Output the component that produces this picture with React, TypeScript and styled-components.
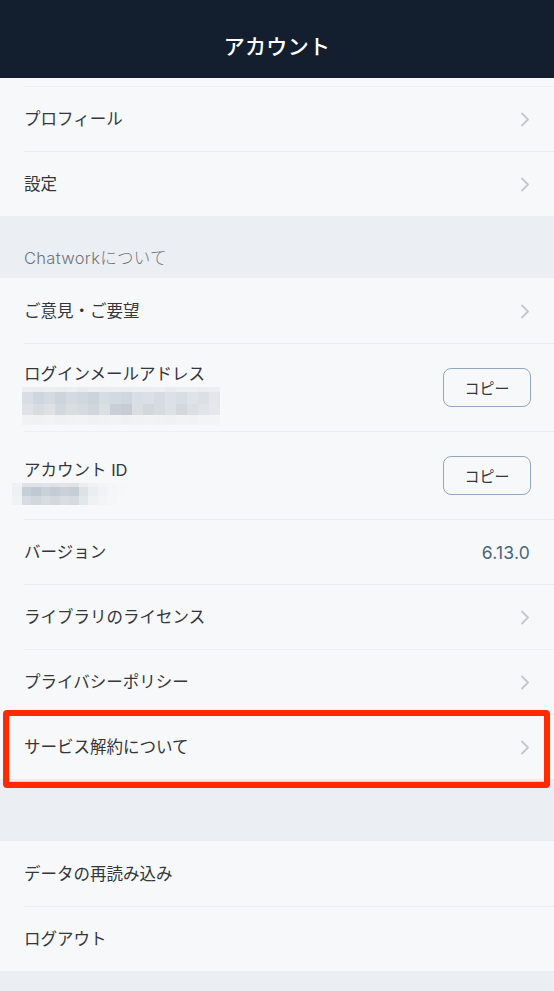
import styled, { createGlobalStyle } from 'styled-components'

const GlobalStyle = createGlobalStyle`
  html, body {
    margin: 0;
    padding: 0;
    background: #ebeef2;
  }
  body {
    font-family: "Inter", "Noto Sans CJK JP", sans-serif;
    -webkit-font-smoothing: antialiased;
  }
`

type RowItem = {
  label: string
  kind?: 'chevron' | 'copy' | 'value' | 'none'
  value?: string
  blur?: 'mail' | 'id'
  tall?: boolean
  highlight?: boolean
}

const groupOne: RowItem[] = [
  { label: 'プロフィール', kind: 'chevron' },
  { label: '設定', kind: 'chevron' },
]

const groupTwo: RowItem[] = [
  { label: 'ご意見・ご要望', kind: 'chevron' },
  { label: 'ログインメールアドレス', kind: 'copy', blur: 'mail', tall: true },
  { label: 'アカウント ID', kind: 'copy', blur: 'id', tall: true },
  { label: 'バージョン', kind: 'value', value: '6.13.0' },
  { label: 'ライブラリのライセンス', kind: 'chevron' },
  { label: 'プライバシーポリシー', kind: 'chevron' },
  { label: 'サービス解約について', kind: 'chevron', highlight: true },
]

const groupThree: RowItem[] = [
  { label: 'データの再読み込み', kind: 'none' },
  { label: 'ログアウト', kind: 'none' },
]

// mosaic colours for the hidden mail address / id
const mailCells = [
  ['#eceff2', '#e9ecf0', '#eceff2', '#eaedf0', '#eceff2', '#e8ebef', '#eceff2', '#eaedf1', '#eceff2', '#e9ecf0', '#eceff2', '#eaedf1', '#eceff2', '#e8ebef', '#eceff2', '#eceff2', '#eaedf0', '#eceff2'],
  ['#d9dee4', '#d0d6dd', '#d4dae0', '#ced4db', '#d5dae1', '#d1d7de', '#cdd3da', '#d7dce2', '#d3d9e0', '#d0d6dd', '#d9dee4', '#dce0e5', '#d6dbe1', '#dde1e6', '#d9dee3', '#e0e4e8', '#dce0e5', '#e3e6ea'],
  ['#dfe3e7', '#d7dce2', '#dde1e6', '#d2d8de', '#d9dee3', '#d6dbe1', '#d0d6dd', '#dadfe4', '#c8cfd7', '#c5ccd4', '#d9dee3', '#d1d7dd', '#d6dbe1', '#dde1e6', '#d2d8de', '#dce0e5', '#e0e3e7', '#e5e8eb'],
  ['#f0f2f4', '#eff1f3', '#f1f3f5', '#eff1f3', '#f0f2f4', '#f1f3f5', '#eff1f3', '#f0f2f4', '#f1f3f5', '#eff1f3', '#f0f2f4', '#f1f3f5', '#f0f2f4', '#eff1f3', '#f1f3f5', '#f0f2f4', '#f3f4f6', '#f3f4f6'],
]

const idCells = [
  ['#eff1f3', '#dfe3e8', '#dde2e6', '#e0e4e8', '#dee2e7', '#e1e5e9', '#dfe3e7', '#ebeef1', '#f0f2f4', '#f2f4f5', '#f5f6f7', '#f6f7f8'],
  ['#edf0f2', '#c6ced7', '#c0c9d2', '#c8d0d8', '#c3cbd4', '#cad1d9', '#c5cdd5', '#dde2e6', '#ebeef0', '#f0f2f4', '#f4f5f7', '#f6f7f8'],
  ['#f0f2f4', '#d6dce2', '#d0d7dd', '#d7dde2', '#d2d8de', '#d9dee3', '#d4dae0', '#e3e7ea', '#eff1f3', '#f2f4f5', '#f5f6f7', '#f7f8f9'],
]

function Chevron() {
  return (
    <svg width="10" height="15" viewBox="0 0 10 15" fill="none">
      <polyline
        points="2,1.5 8,7.5 2,13.5"
        stroke="#c3c6ca"
        strokeWidth="1.8"
        strokeLinecap="round"
        strokeLinejoin="round"
      />
    </svg>
  )
}

function Mosaic({ cells, cellWidth, rowHeights, $offset }: { cells: string[][]; cellWidth: number; rowHeights: number[]; $offset: number }) {
  return (
    <MosaicGrid $cols={cells[0].length} $cw={cellWidth} $rows={rowHeights.map(h => `${h}px`).join(' ')} $offset={$offset}>
      {cells.flatMap((row, r) =>
        row.map((c, i) => <MosaicCell key={`${r}-${i}`} $c={c} />)
      )}
    </MosaicGrid>
  )
}

function Row({ item, first }: { item: RowItem; first: boolean }) {
  return (
    <RowOuter>
      <RowInner $first={first} $tall={!!item.tall}>
        <LabelBlock $tall={!!item.tall}>
          <Label>{item.label}</Label>
          {item.blur === 'mail' && (
            <Mosaic cells={mailCells} cellWidth={11} rowHeights={[5, 12, 11, 10]} $offset={-2} />
          )}
          {item.blur === 'id' && (
            <Mosaic cells={idCells} cellWidth={9.5} rowHeights={[4, 9, 9]} $offset={-12} />
          )}
        </LabelBlock>
        {item.kind === 'chevron' && <Chevron />}
        {item.kind === 'copy' && <CopyButton>コピー</CopyButton>}
        {item.kind === 'value' && <Value>{item.value}</Value>}
      </RowInner>
      {item.highlight && <Highlight />}
    </RowOuter>
  )
}

function Group({ items, $topPad }: { items: RowItem[]; $topPad?: boolean }) {
  return (
    <GroupBox $topPad={!!$topPad}>
      {items.map((item, i) => (
        <Row key={item.label} item={item} first={i === 0 && !$topPad} />
      ))}
    </GroupBox>
  )
}

export default function App() {
  return (
    <Page>
      <GlobalStyle />
      <Header>アカウント</Header>
      <Group items={groupOne} $topPad />
      <SectionTitle>Chatworkについて</SectionTitle>
      <Group items={groupTwo} />
      <Spacer />
      <Group items={groupThree} />
    </Page>
  )
}

const Page = styled.div`
  width: 554px;
  min-height: 991px;
  background: #ebeef2;
  display: flex;
  flex-direction: column;
`

const Header = styled.div`
  height: 78px;
  background: #131f2f;
  color: #ffffff;
  display: flex;
  align-items: center;
  justify-content: center;
  padding-top: 12px;
  box-sizing: border-box;
  font-size: 21px;
  font-weight: 500;
  letter-spacing: 0.3px;
`

const GroupBox = styled.div<{ $topPad: boolean }>`
  background: #f7f8fa;
  padding-top: ${({ $topPad }) => ($topPad ? '8px' : '0')};
`

const RowOuter = styled.div`
  position: relative;
  padding-left: 24px;
`

const RowInner = styled.div<{ $first: boolean; $tall: boolean }>`
  display: flex;
  align-items: center;
  justify-content: space-between;
  box-sizing: border-box;
  height: ${({ $tall }) => ($tall ? '88px' : '65px')};
  padding-right: 24px;
  border-top: 1px solid ${({ $first }) => ($first ? 'transparent' : '#eceef1')};
`

const LabelBlock = styled.div<{ $tall: boolean }>`
  display: flex;
  flex-direction: column;
  justify-content: center;
  padding-top: ${({ $tall }) => ($tall ? '5px' : '0')};
`

const Label = styled.span`
  font-size: 16.5px;
  color: #33363a;
  line-height: 22px;
`

const MosaicGrid = styled.div<{ $cols: number; $cw: number; $rows: string; $offset: number }>`
  display: grid;
  grid-template-columns: repeat(${({ $cols }) => $cols}, ${({ $cw }) => $cw}px);
  grid-template-rows: ${({ $rows }) => $rows};
  margin-left: ${({ $offset }) => $offset}px;
  margin-top: 2px;
  margin-bottom: -8px;
`

const MosaicCell = styled.div<{ $c: string }>`
  background: ${({ $c }) => $c};
`

const CopyButton = styled.button`
  width: 88px;
  height: 39px;
  box-sizing: border-box;
  border: 1.5px solid #91a6bf;
  border-radius: 8px;
  background: transparent;
  font-family: "Noto Sans CJK JP", sans-serif;
  font-size: 15px;
  color: #33363a;
  padding: 0;
  margin-right: -1px;
`

const Value = styled.span`
  font-size: 17.5px;
  font-weight: 400;
  color: #4b667c;
  letter-spacing: 0.2px;
`

const Highlight = styled.div`
  position: absolute;
  left: 3px;
  right: 4px;
  top: -4px;
  bottom: -9px;
  border: 6.5px solid #ff2a00;
  border-radius: 4px;
  box-shadow: inset 1px -1px 0 rgba(0, 0, 0, 0.1);
  pointer-events: none;
`

const SectionTitle = styled.div`
  height: 62px;
  box-sizing: border-box;
  padding: 31px 24px 0;
  font-size: 16.5px;
  font-weight: 300;
  color: #6f747a;
  line-height: 22px;
  letter-spacing: 0.3px;
`

const Spacer = styled.div`
  height: 62px;
`
